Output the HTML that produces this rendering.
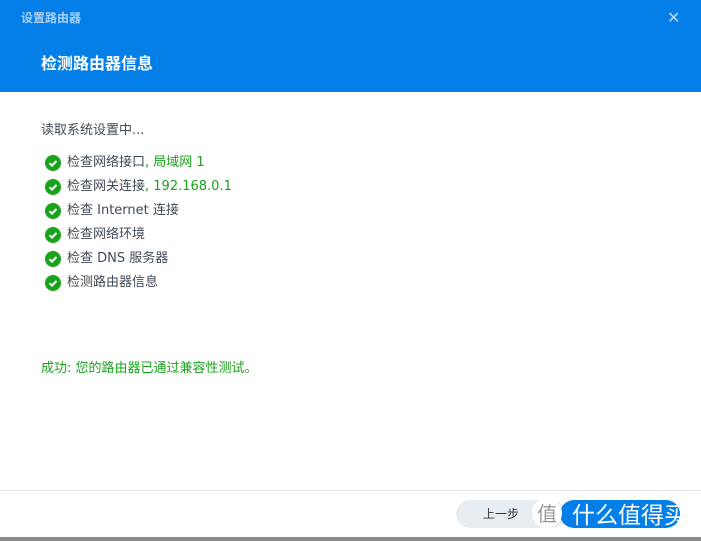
<!DOCTYPE html>
<html><head><meta charset="utf-8"><style>
*{margin:0;padding:0;box-sizing:border-box}
body{width:701px;height:541px;overflow:hidden;background:#fff;font-family:"DejaVu Sans","Noto Sans CJK SC",sans-serif;position:relative}
.hdr{position:absolute;left:0;top:0;width:701px;height:92px;background:#057fe8}
.t1{position:absolute;left:21px;top:9px;font-size:12px;font-weight:bold;color:#a9d1f7;font-family:"Noto Sans CJK SC",sans-serif}
.x{position:absolute;left:667px;top:8px;font-size:16px;font-weight:bold;color:#b6daf9}
.t2{position:absolute;left:41px;top:50px;font-size:16px;font-weight:bold;color:#fff;font-family:"Noto Sans CJK SC",sans-serif}
.txt{position:absolute;font-size:13px;color:#404a55;line-height:16px}
.g{color:#1aa31a}
.ck{position:absolute;width:16px;height:16px;border-radius:50%;background:#1aa31a}
.ck svg{position:absolute;left:0;top:0}
.line{position:absolute;left:0;top:490px;width:701px;height:1px;background:#dde7f0}
.btn1{position:absolute;left:456px;top:500px;width:110px;height:28px;border-radius:14px;background:#e8edf2;font-size:12px;color:#333;padding-left:27px;line-height:28px;font-family:"Noto Sans CJK SC",sans-serif}
.btn2{position:absolute;left:560px;top:500px;width:120px;height:28px;border-radius:14px;background:#057fe8}
.wm{position:absolute;left:532px;top:498px;width:30px;height:30px;border-radius:50%;background:#fff;color:#999;font-size:20px;text-align:center;line-height:30px;font-family:"Noto Sans CJK SC",sans-serif}
.wm2{position:absolute;left:572px;top:497px;font-size:23px;color:#fff;font-family:"Noto Sans CJK SC",sans-serif;line-height:32px}
.bot{position:absolute;left:0;top:537px;width:701px;height:4px;background:#8a8a8a}
</style></head><body>
<div class="hdr"><div class="t1">设置路由器</div><div class="x">✕</div><div class="t2">检测路由器信息</div></div>
<div class="txt" style="left:41px;top:123px">读取系统设置中...</div>
<div class="ck" style="left:45px;top:155px"><svg width="16" height="16"><path d="M4.5 8.2l2.5 2.4 4.5-4.6" stroke="#fff" stroke-width="2" fill="none"/></svg></div>
<div class="txt" style="left:67px;top:155px">检查网络接口<span class="g">, 局域网 1</span></div>
<div class="ck" style="left:45px;top:179px"><svg width="16" height="16"><path d="M4.5 8.2l2.5 2.4 4.5-4.6" stroke="#fff" stroke-width="2" fill="none"/></svg></div>
<div class="txt" style="left:67px;top:179px">检查网关连接<span class="g">, 192.168.0.1</span></div>
<div class="ck" style="left:45px;top:203px"><svg width="16" height="16"><path d="M4.5 8.2l2.5 2.4 4.5-4.6" stroke="#fff" stroke-width="2" fill="none"/></svg></div>
<div class="txt" style="left:67px;top:203px">检查 Internet 连接</div>
<div class="ck" style="left:45px;top:227px"><svg width="16" height="16"><path d="M4.5 8.2l2.5 2.4 4.5-4.6" stroke="#fff" stroke-width="2" fill="none"/></svg></div>
<div class="txt" style="left:67px;top:227px">检查网络环境</div>
<div class="ck" style="left:45px;top:251px"><svg width="16" height="16"><path d="M4.5 8.2l2.5 2.4 4.5-4.6" stroke="#fff" stroke-width="2" fill="none"/></svg></div>
<div class="txt" style="left:67px;top:251px">检查 DNS 服务器</div>
<div class="ck" style="left:45px;top:275px"><svg width="16" height="16"><path d="M4.5 8.2l2.5 2.4 4.5-4.6" stroke="#fff" stroke-width="2" fill="none"/></svg></div>
<div class="txt" style="left:67px;top:275px">检测路由器信息</div>
<div class="txt g" style="left:41px;top:361px">成功: 您的路由器已通过兼容性测试。</div>
<div class="line"></div>
<div class="btn1">上一步</div>
<div class="btn2"></div>
<div class="wm">值</div>
<div class="wm2">什么值得买</div>
<div class="bot"></div>
</body></html>
